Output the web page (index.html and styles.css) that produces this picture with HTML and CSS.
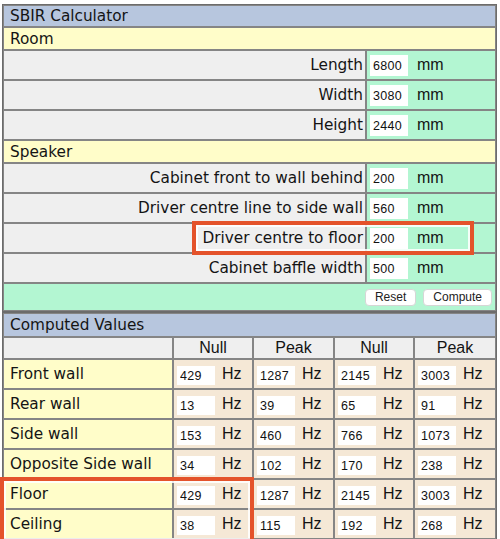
FILE: index.html
```html
<!DOCTYPE html>
<html lang="en">
<head>
<meta charset="utf-8">
<title>SBIR Calculator</title>
<link rel="stylesheet" href="styles.css">
</head>
<body>
<div class="calc">
  <table class="grid inputs">
    <colgroup><col class="c-label"><col class="c-value"></colgroup>
    <tr class="row-title"><th colspan="2" class="title">SBIR Calculator</th></tr>
    <tr class="row-section"><th colspan="2" class="section">Room</th></tr>
    <tr class="row-data"><td class="label">Length</td><td class="value"><input class="field" type="text" value="6800"><span class="unit">mm</span></td></tr>
    <tr class="row-data"><td class="label">Width</td><td class="value"><input class="field" type="text" value="3080"><span class="unit">mm</span></td></tr>
    <tr class="row-data"><td class="label">Height</td><td class="value"><input class="field" type="text" value="2440"><span class="unit">mm</span></td></tr>
    <tr class="row-section"><th colspan="2" class="section">Speaker</th></tr>
    <tr class="row-data"><td class="label">Cabinet front to wall behind</td><td class="value"><input class="field" type="text" value="200"><span class="unit">mm</span></td></tr>
    <tr class="row-data"><td class="label">Driver centre line to side wall</td><td class="value"><input class="field" type="text" value="560"><span class="unit">mm</span></td></tr>
    <tr class="row-data"><td class="label">Driver centre to floor</td><td class="value"><input class="field" type="text" value="200"><span class="unit">mm</span></td></tr>
    <tr class="row-data"><td class="label">Cabinet baffle width</td><td class="value"><input class="field" type="text" value="500"><span class="unit">mm</span></td></tr>
    <tr class="row-actions"><td colspan="2" class="actions"><button class="btn" type="button">Reset</button><button class="btn" type="button">Compute</button></td></tr>
  </table>
  <table class="grid results">
    <colgroup><col class="r-label"><col class="r-null"><col class="r-peak"><col class="r-null"><col class="r-peak2"></colgroup>
    <tr class="row-rtitle"><th colspan="5" class="title">Computed Values</th></tr>
    <tr class="row-head"><th class="blank"></th><th class="head">Null</th><th class="head">Peak</th><th class="head">Null</th><th class="head">Peak</th></tr>
    <tr class="row-data"><td class="rlabel">Front wall</td><td class="hz"><input class="field small" type="text" value="429"><span class="unit">Hz</span></td><td class="hz"><input class="field small" type="text" value="1287"><span class="unit">Hz</span></td><td class="hz"><input class="field small" type="text" value="2145"><span class="unit">Hz</span></td><td class="hz"><input class="field small" type="text" value="3003"><span class="unit">Hz</span></td></tr>
    <tr class="row-data"><td class="rlabel">Rear wall</td><td class="hz"><input class="field small" type="text" value="13"><span class="unit">Hz</span></td><td class="hz"><input class="field small" type="text" value="39"><span class="unit">Hz</span></td><td class="hz"><input class="field small" type="text" value="65"><span class="unit">Hz</span></td><td class="hz"><input class="field small" type="text" value="91"><span class="unit">Hz</span></td></tr>
    <tr class="row-data"><td class="rlabel">Side wall</td><td class="hz"><input class="field small" type="text" value="153"><span class="unit">Hz</span></td><td class="hz"><input class="field small" type="text" value="460"><span class="unit">Hz</span></td><td class="hz"><input class="field small" type="text" value="766"><span class="unit">Hz</span></td><td class="hz"><input class="field small" type="text" value="1073"><span class="unit">Hz</span></td></tr>
    <tr class="row-data"><td class="rlabel">Opposite Side wall</td><td class="hz"><input class="field small" type="text" value="34"><span class="unit">Hz</span></td><td class="hz"><input class="field small" type="text" value="102"><span class="unit">Hz</span></td><td class="hz"><input class="field small" type="text" value="170"><span class="unit">Hz</span></td><td class="hz"><input class="field small" type="text" value="238"><span class="unit">Hz</span></td></tr>
    <tr class="row-data"><td class="rlabel">Floor</td><td class="hz"><input class="field small" type="text" value="429"><span class="unit">Hz</span></td><td class="hz"><input class="field small" type="text" value="1287"><span class="unit">Hz</span></td><td class="hz"><input class="field small" type="text" value="2145"><span class="unit">Hz</span></td><td class="hz"><input class="field small" type="text" value="3003"><span class="unit">Hz</span></td></tr>
    <tr class="row-data"><td class="rlabel">Ceiling</td><td class="hz"><input class="field small" type="text" value="38"><span class="unit">Hz</span></td><td class="hz"><input class="field small" type="text" value="115"><span class="unit">Hz</span></td><td class="hz"><input class="field small" type="text" value="192"><span class="unit">Hz</span></td><td class="hz"><input class="field small" type="text" value="268"><span class="unit">Hz</span></td></tr>
  </table>
  <div class="mark mark-floor"></div>
  <div class="mark mark-rows"></div>
</div>
</body>
</html>
```

FILE: styles.css
```css
html {
  overflow: hidden;
}

body {
  margin: 0;
  padding: 4px 0 0 2px;
  background: #ffffff;
  color: #141414;
  font-family: "DejaVu Sans", Verdana, sans-serif;
  font-size: 15.3px;
}

.calc {
  position: relative;
  width: 495px;
}

.grid {
  width: 495px;
  table-layout: fixed;
  border-collapse: separate;
  border-spacing: 0;
  border: 1px solid #6c6c6c;
}

.grid th,
.grid td {
  box-sizing: border-box;
  border: 1px solid #858585;
  font-weight: normal;
  vertical-align: middle;
}

.c-label { width: 363px; }
.c-value { width: 130px; }

.r-label { width: 170px; }
.r-null { width: 80px; }
.r-peak { width: 81px; }
.r-peak2 { width: 82px; }

.row-title > * { height: 22px; }
.row-section > * { height: 23px; }
.row-data > * { height: 30px; }
.row-actions > * { height: 28px; }
.row-rtitle > * { height: 24px; }
.row-head > * { height: 22px; }

.grid .title {
  background: #b7c6de;
  text-align: left;
  padding: 0 0 0 6px;
  line-height: 18px;
}

.grid .section {
  background: #fffdc9;
  text-align: left;
  padding: 0 0 0 6px;
}

.grid .label {
  background: #efefef;
  text-align: right;
  padding: 0 2px 0 0;
  white-space: nowrap;
}

.grid .value {
  background: #b3f6d2;
  padding: 0 0 0 3px;
  white-space: nowrap;
}

.field {
  box-sizing: border-box;
  width: 38px;
  height: 21px;
  border: none;
  margin: 0;
  padding: 2px 0 0 3px;
  background: #ffffff;
  font-family: "Liberation Sans", Arial, sans-serif;
  font-size: 12.5px;
  letter-spacing: 0.3px;
  color: #111;
  vertical-align: middle;
  outline: none;
}

.field.small {
  height: 19px;
  margin-top: 2px;
}

.unit {
  display: inline-block;
  margin-left: 9px;
  font-family: "Liberation Sans", Arial, sans-serif;
  font-size: 16px;
  vertical-align: middle;
}

.hz .unit {
  margin-left: 7px;
}

.grid .actions {
  background: #b3f6d2;
  text-align: right;
  padding: 0 3px 0 0;
}

.btn {
  box-sizing: border-box;
  height: 17px;
  margin: 0 0 0 7px;
  padding: 0 9px;
  border: 1px solid #d6d6d6;
  border-radius: 4px;
  background: #ffffff;
  font-family: "Liberation Sans", Arial, sans-serif;
  font-size: 12px;
  line-height: 15px;
  color: #222;
  vertical-align: middle;
}

.grid .blank,
.grid .head {
  background: #efefef;
  padding: 0;
}

.grid .head {
  text-align: center;
  font-family: "Liberation Sans", Arial, sans-serif;
  font-size: 16px;
}

.grid .rlabel {
  background: #fffdc9;
  padding: 0 0 0 6px;
  white-space: nowrap;
}

.grid .hz {
  background: #f5e8d6;
  padding: 0 0 0 3px;
  white-space: nowrap;
}

.mark {
  position: absolute;
  box-sizing: border-box;
  border: 4px solid #e4532b;
  box-shadow: inset 0 0 0 2px rgba(255, 255, 255, 0.85);
}

.mark-floor {
  left: 190px;
  top: 217px;
  width: 282px;
  height: 34px;
}

.mark-rows {
  left: -2px;
  top: 473px;
  width: 254px;
  height: 63px;
  border-bottom: none;
}
```
